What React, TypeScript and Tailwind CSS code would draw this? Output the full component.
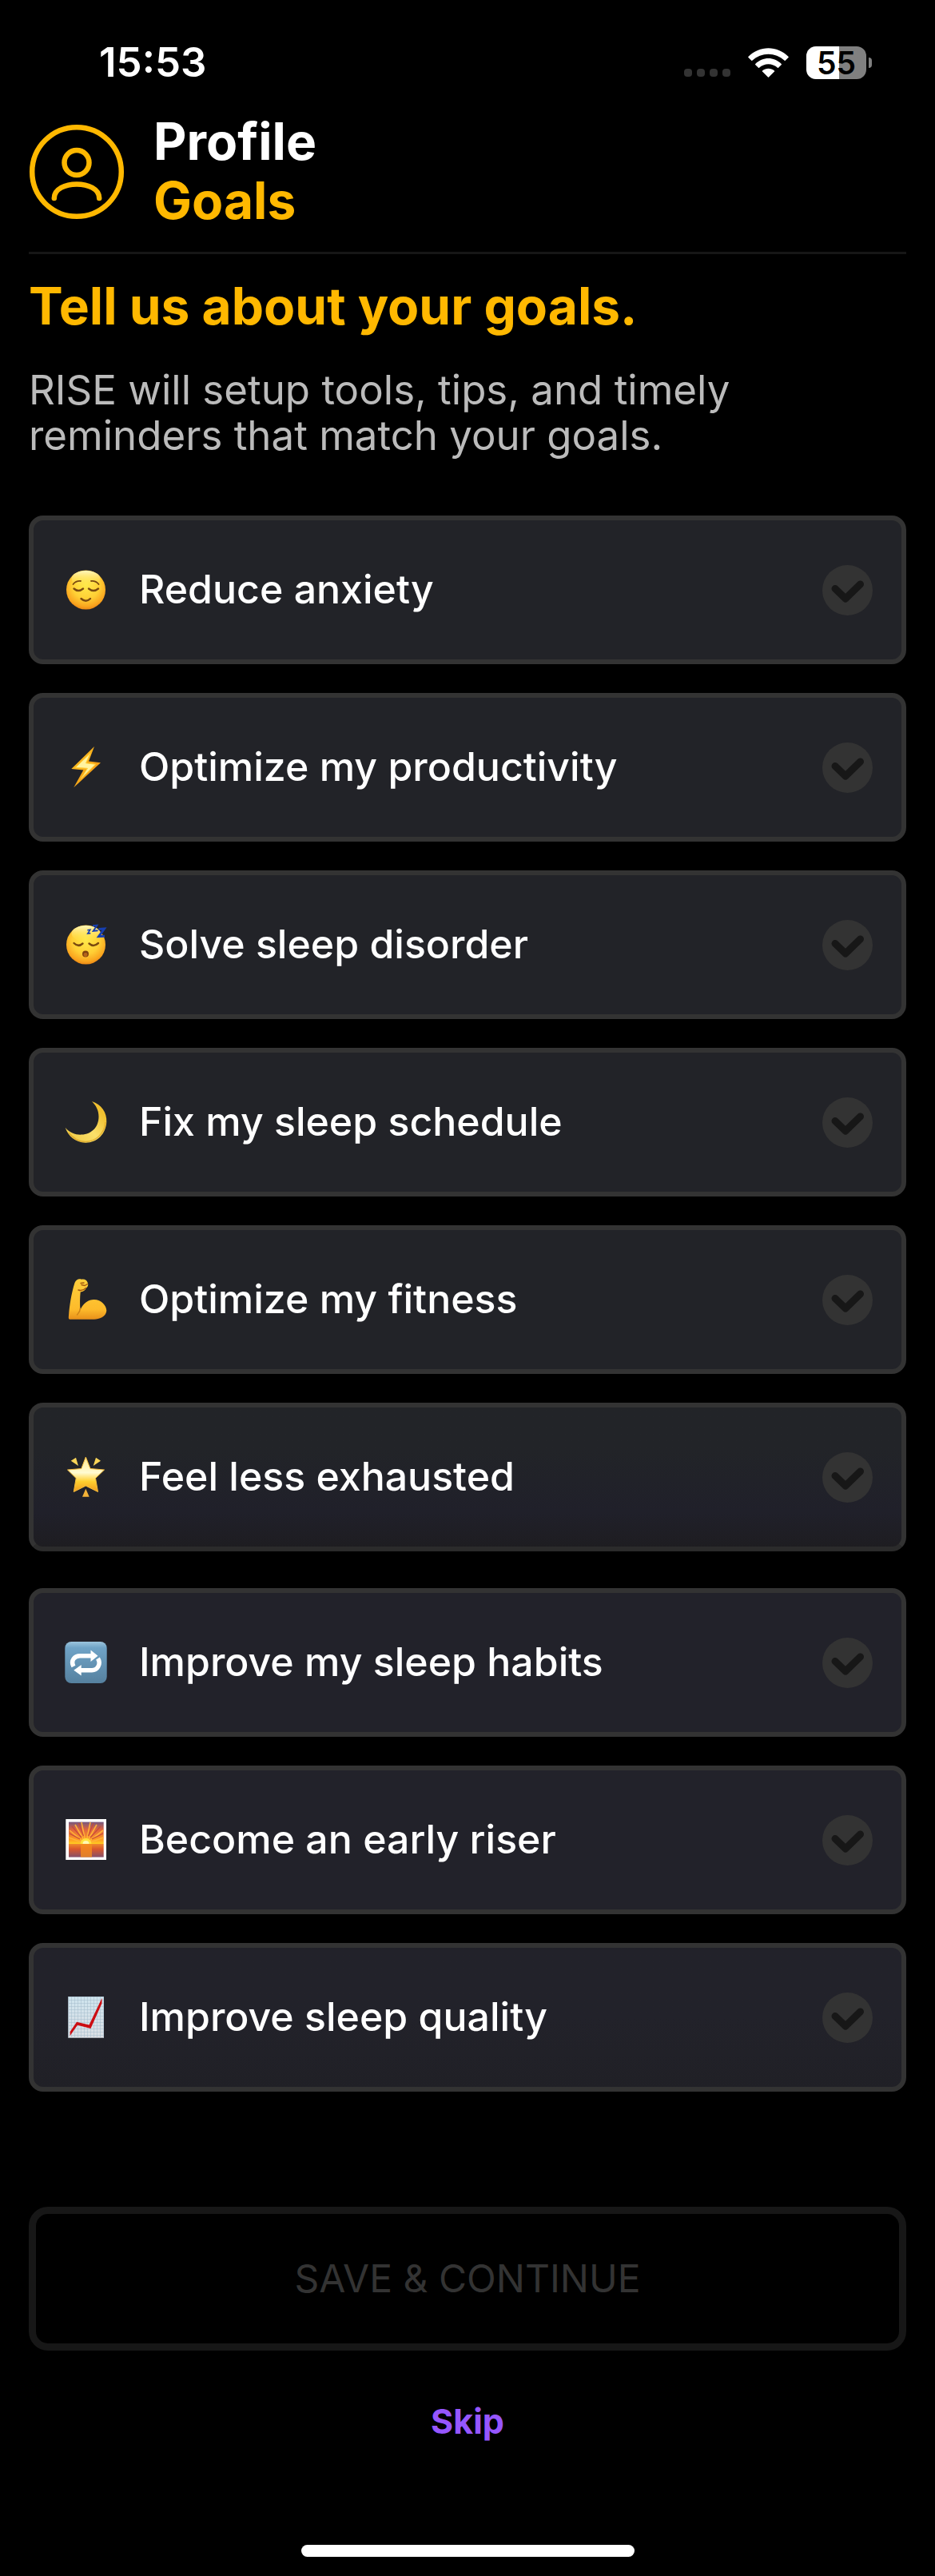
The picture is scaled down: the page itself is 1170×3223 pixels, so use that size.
import type { ReactNode } from 'react';

type Goal = { id: string; label: string; icon: ReactNode; tone: string };

const plain = 'border-[#333333] bg-[#222328]';
const faded = 'border-[#333333] border-b-[#2b2b2b] bg-linear-to-b from-[#222428] from-30% via-[#20202a] via-75% to-[#1e1d21]';
const violet = 'border-[#333333] bg-[#22222a]';
const violetFaded = 'border-[#333333] bg-linear-to-b from-[#22222a] from-50% to-[#202026]';

function Emoji({ children }: { children: ReactNode }) {
  return (
    <svg viewBox="0 0 54 54" className="size-[54px] shrink-0" aria-hidden="true">
      {children}
    </svg>
  );
}

function FaceBase({ id }: { id: string }) {
  return (
    <>
      <defs>
        <radialGradient id={id} cx="0.5" cy="0.38" r="0.64">
          <stop offset="0" stopColor="#ffe94a" />
          <stop offset="0.55" stopColor="#ffcf35" />
          <stop offset="0.85" stopColor="#f9a51f" />
          <stop offset="1" stopColor="#e98212" />
        </radialGradient>
        <linearGradient id={id + '-shine'} x1="0" y1="0" x2="0" y2="1">
          <stop offset="0" stopColor="#fffbd0" stopOpacity="0.9" />
          <stop offset="1" stopColor="#ffe94a" stopOpacity="0" />
        </linearGradient>
      </defs>
      <circle cx="27.5" cy="27" r="24.5" fill={`url(#${id})`} />
      <ellipse cx="27.5" cy="13" rx="18" ry="10" fill={`url(#${id}-shine)`} />
    </>
  );
}

const relieved = (
  <Emoji>
    <FaceBase id="face-relieved" />
    <g fill="none" stroke="#7a4a10" strokeLinecap="round">
      <path d="M11.5 20Q15 15.5 21 16" strokeWidth="1.8" />
      <path d="M34 16Q40 15.5 43.5 20" strokeWidth="1.8" />
      <path d="M12.5 25.5Q18 30.5 24 25.5" strokeWidth="2.4" />
      <path d="M31 25.5Q37 30.5 43 25.5" strokeWidth="2.4" />
      <path d="M21.5 38Q27.5 43.5 33 38" strokeWidth="2.4" />
    </g>
  </Emoji>
);

const bolt = (
  <Emoji>
    <defs>
      <linearGradient id="bolt-fill" x1="0" y1="0" x2="1" y2="1">
        <stop offset="0" stopColor="#ffc928" />
        <stop offset="1" stopColor="#f08c0c" />
      </linearGradient>
    </defs>
    <path d="M38 1L31 19.5 46 21.3 12.3 52.3 24.3 30.6 9.3 29Z" fill="url(#bolt-fill)" />
    <path d="M33 9.5L27.5 21.8 39.5 23.3 21.5 41 29.5 28.3 14.5 27.3Z" fill="#fff3a0" stroke="#ffd23a" strokeWidth="1" />
  </Emoji>
);

const sleeping = (
  <Emoji>
    <FaceBase id="face-sleeping" />
    <g fill="none" stroke="#7a4a10" strokeLinecap="round" strokeWidth="2.4">
      <path d="M12.5 25Q18 30.5 23.5 25.5" />
      <path d="M31.5 25.5Q37 30.5 43 25" />
    </g>
    <circle cx="27" cy="38.5" r="4" fill="#80430f" />
    <circle cx="27" cy="39.5" r="2.4" fill="#b5651b" />
    <g fill="none" stroke="#173fb0" strokeLinejoin="miter">
      <path d="M29.3 8.7L32.8 8.3L29.8 13L33.3 12.6" strokeWidth="1.6" />
      <path d="M36 3.3L41.5 2.8L36.8 9.8L42.5 9.3" strokeWidth="2" />
      <path d="M43.5 7.5L50.5 7L43.6 16.7L51 16.3" strokeWidth="3" />
    </g>
  </Emoji>
);

const moon = (
  <Emoji>
    <defs>
      <linearGradient id="moon-fill" x1="0.2" y1="0.9" x2="0.9" y2="0.3">
        <stop offset="0" stopColor="#f2cf4c" />
        <stop offset="0.5" stopColor="#fbe06a" />
        <stop offset="1" stopColor="#f0c030" />
      </linearGradient>
    </defs>
    <path
      d="M35 1C47 5 54 15 53.3 27C52.5 42 41 53 27 52.7C14 52.3 5 44 1.7 33.7C7 40.5 15 43 22 42.6C35 42 43.5 33 43.5 20C43.5 12 40 6 35 1Z"
      fill="url(#moon-fill)"
    />
    <path d="M6 40C12 48 19 51.5 27 51.5C40 51.5 51 41 52 27" fill="none" stroke="#dca324" strokeWidth="1.5" opacity="0.7" />
  </Emoji>
);

const arm = (
  <Emoji>
    <defs>
      <linearGradient id="arm-fill" x1="0" y1="0" x2="0" y2="1">
        <stop offset="0" stopColor="#ffcf3c" />
        <stop offset="0.75" stopColor="#fdbb2b" />
        <stop offset="1" stopColor="#e8901a" />
      </linearGradient>
    </defs>
    <path
      d="M13.5 6C15 2 19 0.5 22 1.8C26 1 29 3 29.5 5.5C31 8 30 11 28 12.5C26.5 15.5 24 17 20.7 17.5C20 24 19.8 33 20.5 40C24 31 31 27 37.5 27C47 27 53.5 35 53.3 41C52.5 49 44 51.5 38 51.7L8 51.7C6 51.7 5.5 50.5 6 47C7 35 9 20 13.5 6Z"
      fill="url(#arm-fill)"
    />
    <path
      d="M21 6.5L25 6M22 8.5L26 9.5L29.5 7.5M18 15C21 16 25 15 27.5 12.5"
      fill="none"
      stroke="#a45a10"
      strokeWidth="1.4"
      strokeLinecap="round"
    />
    <path d="M20.3 38C20.5 42 18 44 16.5 46" fill="none" stroke="#cf8418" strokeWidth="1.5" strokeLinecap="round" />
  </Emoji>
);

const star = (
  <Emoji>
    <defs>
      <linearGradient id="star-fill" x1="0" y1="0" x2="0" y2="1">
        <stop offset="0" stopColor="#ffe890" />
        <stop offset="0.45" stopColor="#fffbd2" />
        <stop offset="0.7" stopColor="#ffd030" />
        <stop offset="1" stopColor="#ef9a1c" />
      </linearGradient>
    </defs>
    <path
      d="M27.3 2L33 16.5L50.5 18L39.5 28.5L42.5 45.5L27.3 38L12.3 45.5L15.2 28.5L4.5 18L21.8 16.5Z"
      fill="url(#star-fill)"
      stroke="#f5bd3c"
      strokeWidth="1"
      strokeLinejoin="round"
    />
    <path d="M8.7 6.7L15 2.7L18 13ZM46 6.7L40 2.7L36.7 13Z" fill="#f8d458" />
    <path d="M27.3 41.7L23 51.7H31.7Z" fill="#f3b238" />
  </Emoji>
);

const repeat = (
  <Emoji>
    <defs>
      <linearGradient id="repeat-fill" x1="0" y1="0" x2="0" y2="1">
        <stop offset="0" stopColor="#9cc4dc" />
        <stop offset="0.15" stopColor="#6fa3c6" />
        <stop offset="1" stopColor="#56819f" />
      </linearGradient>
    </defs>
    <rect x="1.3" y="1" width="52.4" height="52" rx="8" fill="url(#repeat-fill)" />
    <g fill="none" stroke="#ffffff" strokeWidth="5.5">
      <path d="M12 32C8 24.5 13.5 18.7 20 18.7H34" />
      <path d="M42.5 22C47 29.5 41.5 36.7 35 36.7H21" />
    </g>
    <path d="M33.5 11.6L42.5 18.7L33.5 26ZM21.7 30L12.3 36.7L21.7 43.5Z" fill="#ffffff" />
  </Emoji>
);

const sunrise = (
  <Emoji>
    <defs>
      <linearGradient id="sky-fill" x1="0" y1="0" x2="0" y2="1">
        <stop offset="0" stopColor="#75587f" />
        <stop offset="0.35" stopColor="#e0653f" />
        <stop offset="0.8" stopColor="#ff9c22" />
        <stop offset="1" stopColor="#ffd022" />
      </linearGradient>
      <linearGradient id="sea-fill" x1="0" y1="0" x2="0" y2="1">
        <stop offset="0" stopColor="#f08a2c" />
        <stop offset="0.4" stopColor="#d9562c" />
        <stop offset="1" stopColor="#85506a" />
      </linearGradient>
    </defs>
    <rect x="2.3" y="1" width="50.7" height="51" fill="#ffffff" />
    <rect x="6" y="4.6" width="43.7" height="27.6" fill="url(#sky-fill)" />
    <path
      d="M27.5 32L6 24M27.5 32L7 15M27.5 32L14 8M27.5 32L22 5M27.5 32L33 5M27.5 32L41 8M27.5 32L49 15M27.5 32L49.5 24"
      stroke="#ffb238"
      strokeWidth="1.6"
    />
    <path d="M20 26L7 19M22 24L10 10M24.5 22L18.5 6M30.5 22L37 6M33 24L46 10M35 26L49 19" stroke="#c84a3c" strokeWidth="1.2" />
    <rect x="6" y="32" width="43.7" height="16.6" fill="url(#sea-fill)" />
    <rect x="21" y="32" width="14" height="16.6" fill="#f58c1e" opacity="0.8" />
    <path d="M20.5 32A7 7 0 0 1 34.5 32Z" fill="#ffe23c" />
    <path d="M23.5 32A4 4 0 0 1 31.5 32Z" fill="#fff9b0" />
  </Emoji>
);

const chart = (
  <Emoji>
    <defs>
      <linearGradient id="paper-fill" x1="0" y1="0" x2="0" y2="1">
        <stop offset="0" stopColor="#cfe4ee" />
        <stop offset="1" stopColor="#dcdfe4" />
      </linearGradient>
      <pattern id="paper-grid" x="5" y="1" width="4" height="4" patternUnits="userSpaceOnUse">
        <path d="M0 0H4M0 0V4" stroke="#a3bccb" strokeWidth="1" />
      </pattern>
    </defs>
    <rect x="5.3" y="1" width="44.7" height="51.7" fill="url(#paper-fill)" />
    <rect x="5.3" y="1" width="44.7" height="51.7" fill="url(#paper-grid)" />
    <path d="M7.7 45L16 32.7L31.5 36.5L47.5 3V9.5L33.5 41L17 36.7L7.7 50Z" fill="#cc0d12" />
  </Emoji>
);

const firstGoals: Goal[] = [
  { id: 'anxiety', label: 'Reduce anxiety', icon: relieved, tone: plain },
  { id: 'productivity', label: 'Optimize my productivity', icon: bolt, tone: plain },
  { id: 'disorder', label: 'Solve sleep disorder', icon: sleeping, tone: plain },
  { id: 'schedule', label: 'Fix my sleep schedule', icon: moon, tone: plain },
  { id: 'fitness', label: 'Optimize my fitness', icon: arm, tone: plain },
  { id: 'exhausted', label: 'Feel less exhausted', icon: star, tone: faded },
];

const moreGoals: Goal[] = [
  { id: 'habits', label: 'Improve my sleep habits', icon: repeat, tone: violet },
  { id: 'early', label: 'Become an early riser', icon: sunrise, tone: violet },
  { id: 'quality', label: 'Improve sleep quality', icon: chart, tone: violetFaded },
];

function GoalList({ goals }: { goals: Goal[] }) {
  return (
    <ul className="flex flex-col gap-9">
      {goals.map((goal) => (
        <li key={goal.id}>
          <label
            htmlFor={goal.id}
            className={'flex min-h-[186px] cursor-pointer items-center rounded-[18px] border-[6px] pr-9 pl-[38px] ' + goal.tone}
          >
            {goal.icon}
            <span className="ml-10 flex-1 pb-0.5 text-[50px] leading-[57px] font-medium text-white">{goal.label}</span>
            <span className="grid shrink-0 place-items-center">
              <input
                id={goal.id}
                type="checkbox"
                className="col-start-1 row-start-1 size-[63px] cursor-pointer appearance-none rounded-full bg-[#333333] checked:bg-[#ffb800]"
              />
              <svg viewBox="0 0 63 63" className="pointer-events-none col-start-1 row-start-1 size-[63px]" aria-hidden="true">
                <path d="M16 29.5L29 42L47.5 24" fill="none" stroke="#171717" strokeWidth="9" strokeLinecap="round" strokeLinejoin="round" />
              </svg>
            </span>
          </label>
        </li>
      ))}
    </ul>
  );
}

function StatusBar() {
  return (
    <div className="flex h-[60px] items-center justify-between pr-[79px] pl-[124px] font-semibold">
      <time className="text-[51px] leading-[60px] text-white">15:53</time>
      <div className="flex items-center">
        <div className="mr-[22px] flex gap-1.5 pt-[26px]">
          <span className="size-2.5 rounded-[4px] bg-[#333333]" />
          <span className="size-2.5 rounded-[4px] bg-[#333333]" />
          <span className="size-2.5 rounded-[4px] bg-[#333333]" />
          <span className="size-2.5 rounded-[4px] bg-[#333333]" />
        </div>
        <svg viewBox="0 0 51 37" className="mr-[22px] h-[37px] w-[51px]" fill="#ffffff" aria-hidden="true">
          <path d="M0.3 11C14.5 -3.4 36.5 -3.4 50.7 11Q51 11.5 50.5 12L46.7 15.7Q46.2 16.2 45.7 15.7C34.3 5 16.7 5 5.3 15.7Q4.8 16.2 4.3 15.7L0.5 12Q0 11.5 0.3 11Z" />
          <path d="M9.2 20C18.5 10.7 32.5 10.7 41.8 20Q42.3 20.5 41.8 21L38 24.7Q37.5 25.2 37 24.7C30.5 18.7 20.5 18.7 14 24.7Q13.5 25.2 13 24.7L9.2 21Q8.7 20.5 9.2 20Z" />
          <path d="M18 28.5C22.3 24.8 28.7 24.8 33 28.5Q33.5 29 33 29.5L26 36.5Q25.5 37 25 36.5L18 29.5Q17.5 29 18 28.5Z" />
        </svg>
        <div className="flex h-[41px] w-[75px] items-center justify-center rounded-[12px] bg-linear-to-r from-white from-55% to-[#808080] to-55% text-[39px] leading-none text-black">
          55
        </div>
        <span className="ml-[3px] h-[13px] w-1 rounded-r-full bg-[#808080]" />
      </div>
    </div>
  );
}

export default function App() {
  return (
    <main className="flex min-h-screen flex-col bg-black pt-12 pb-6 font-['Inter',sans-serif]">
      <StatusBar />
      <div className="mt-8 px-9">
        <header className="flex items-center gap-9 border-b-[3px] border-[#161616] pb-[27px]">
          <svg
            viewBox="0 0 120 120"
            className="mt-0.5 size-[120px] shrink-0"
            fill="none"
            stroke="#ffb800"
            strokeWidth="6.5"
            strokeLinecap="round"
            aria-hidden="true"
          >
            <circle cx="60" cy="60" r="55.8" />
            <circle cx="60" cy="48.5" r="15.5" />
            <path d="M31.8 93C31.8 69.5 88.2 69.5 88.2 93" />
          </svg>
          <h1 className="text-[64px] leading-[74px] font-bold text-white">
            Profile
            <span className="block text-[#ffb800]">Goals</span>
          </h1>
        </header>
        <h2 className="mt-7 text-[64px] leading-[74px] font-bold text-[#ffb800]">Tell us about your goals.</h2>
        <p className="mt-[39px] mb-[72px] max-w-[960px] text-[51px] leading-[57px] text-[#bbbbbb]">
          RISE will setup tools, tips, and timely reminders that match your goals.
        </p>
        <GoalList goals={firstGoals} />
        <div className="mt-[46px]">
          <GoalList goals={moreGoals} />
        </div>
        <button
          type="button"
          disabled
          className="mt-36 block h-[180px] w-full rounded-[24px] border-[9px] border-[#171717] pb-0.5 text-[48px] leading-[57px] text-[#333333]"
        >
          SAVE &amp; CONTINUE
        </button>
        <button type="button" className="mx-auto mt-[58px] block cursor-pointer text-[43px] leading-[60px] font-bold text-[#9656ff]">
          Skip
        </button>
      </div>
      <div className="mx-auto mt-[125px] h-[15px] w-[417px] rounded-full bg-white" />
    </main>
  );
}
